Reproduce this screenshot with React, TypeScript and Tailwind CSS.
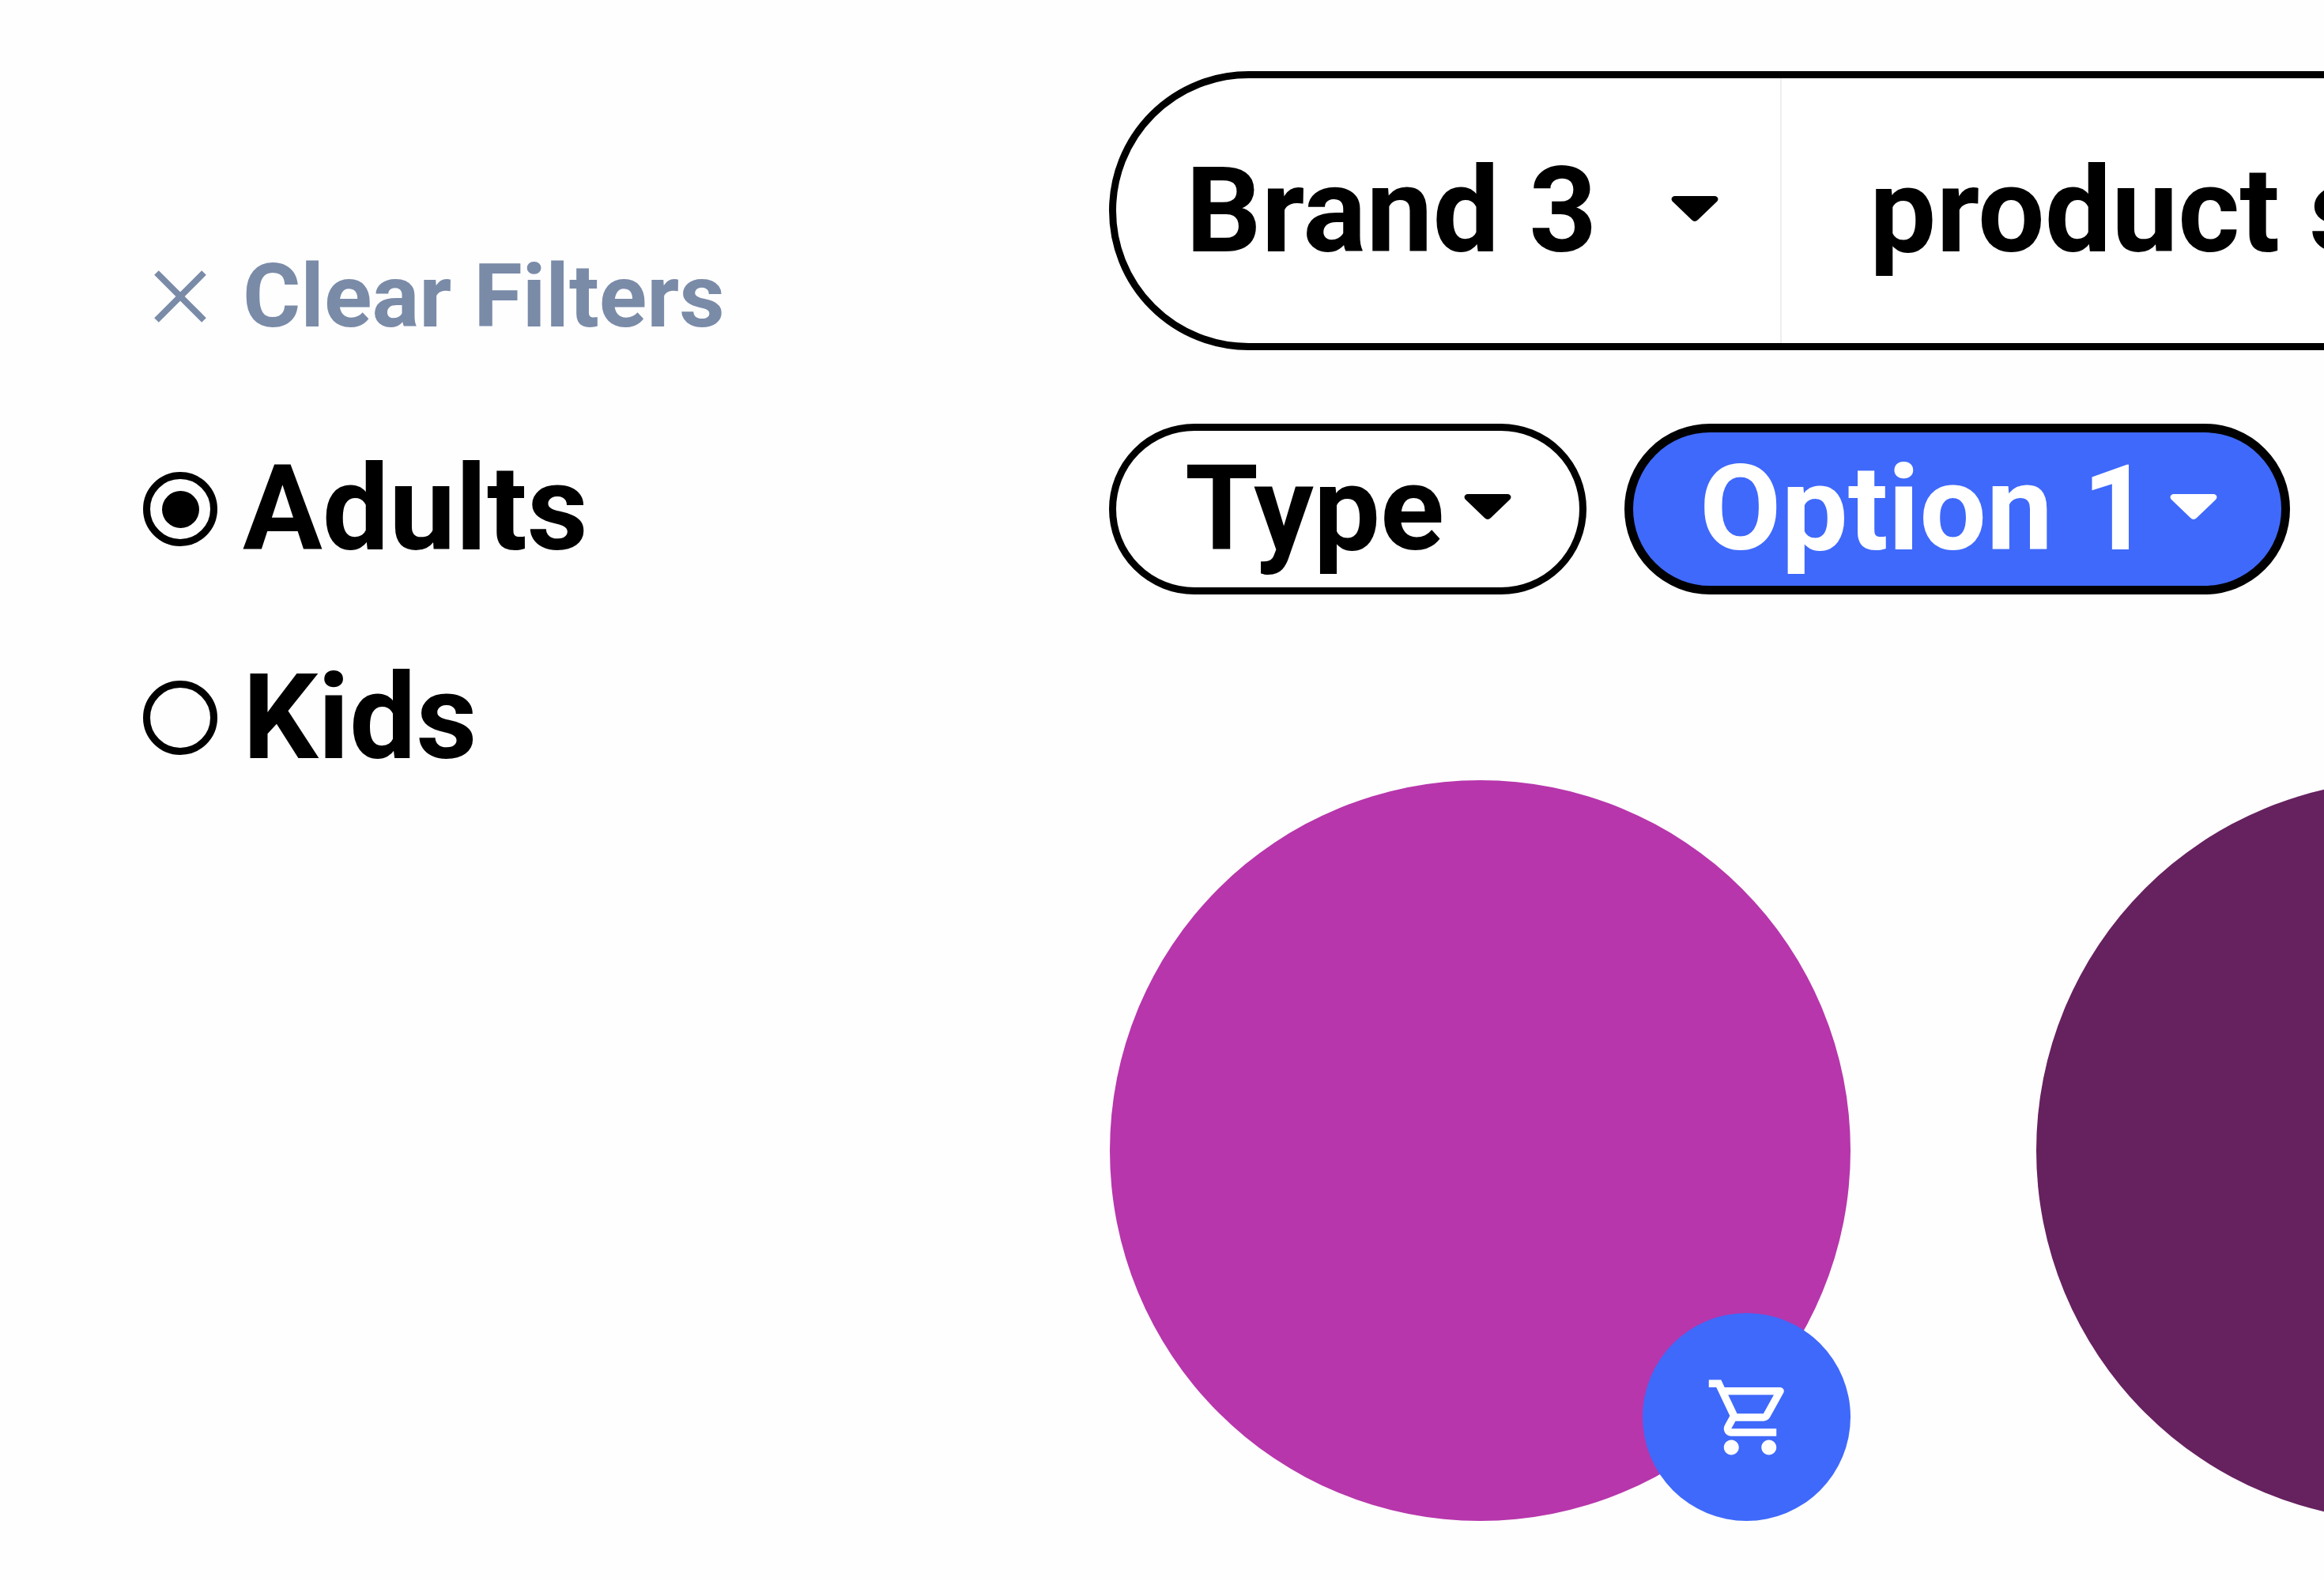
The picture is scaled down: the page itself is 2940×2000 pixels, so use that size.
import { MdOutlineShoppingCart } from "react-icons/md";

function Caret({ className }: { className: string }) {
  return (
    <svg viewBox="0 0 60 33" className={`w-[60px] h-[33px] shrink-0 ${className}`} fill="currentColor">
      <path d="M5 0h50c4 0 6 4 3 7L34 30c-2.500 2.500-5.500 2.500-8 0L2 7C-1 4 1 0 5 0z" />
    </svg>
  );
}

function Radio({ checked }: { checked?: boolean }) {
  return (
    <span className="flex h-[94px] w-[94px] shrink-0 items-center justify-center rounded-full border-[9px] border-black">
      {checked && <span className="h-[47px] w-[47px] rounded-full bg-black" />}
    </span>
  );
}

function Product({ color, cart }: { color: string; cart?: boolean }) {
  return (
    <div className={`relative h-[937px] w-[937px] shrink-0 rounded-full ${color}`}>
      {cart && (
        <button className="absolute bottom-0 right-0 flex h-[263px] w-[263px] items-center justify-center rounded-full bg-[#3f69fb] text-white">
          <MdOutlineShoppingCart size={114} className="ml-[9px]" />
        </button>
      )}
    </div>
  );
}

export default function App() {
  return (
    <div className="flex h-[2000px] w-[2940px] overflow-hidden bg-[#fefefe] font-[Roboto,sans-serif] font-bold text-black">
      <aside className="w-[1403px] shrink-0 pl-[181px] pt-[319px]">
        <div className="flex h-[112px] items-center pl-[14px] text-[#7a8ba8]">
          <svg viewBox="0 0 66 66" className="h-[66px] w-[66px] shrink-0" stroke="currentColor" strokeWidth="8">
            <line x1="3" y1="3" x2="63" y2="63" />
            <line x1="63" y1="3" x2="3" y2="63" />
          </svg>
          <span className="ml-[46px] text-[112px] leading-none">Clear Filters</span>
        </div>
        <div className="mt-[138px] flex h-[150px] items-center gap-[32px]">
          <Radio checked />
          <span className="text-[150px] leading-none">Adults</span>
        </div>
        <div className="mt-[114px] flex h-[150px] items-center gap-[32px]">
          <Radio />
          <span className="text-[150px] leading-none">Kids</span>
        </div>
      </aside>

      <main className="flex-1 pt-[90px]">
        <div className="flex h-[353px] w-[1800px] items-center rounded-full border-[9px] border-black bg-white">
          <div className="flex h-full w-[842px] shrink-0 items-center border-r-2 border-[#eeeeee] pl-[88px]">
            <span className="text-[150px] leading-none">Brand 3</span>
            <Caret className="ml-[94px] mt-[-5px]" />
          </div>
          <span className="ml-[111px] whitespace-nowrap text-[150px] leading-none">product search</span>
        </div>

        <div className="mt-[93px] flex gap-[48px]">
          <div className="flex h-[216px] w-[604px] items-center rounded-full border-[9px] border-black bg-white pl-[87px]">
            <span className="text-[150px] leading-none">Type</span>
            <Caret className="ml-[25px] mt-[-5px]" />
          </div>
          <div className="flex h-[216px] w-[842px] items-center rounded-full border-[11px] border-black bg-[#3f69fb] pl-[84px] text-white">
            <span className="text-[150px] leading-none">Option 1</span>
            <Caret className="ml-[25px] mt-[-5px]" />
          </div>
        </div>

        <div className="ml-[1px] mt-[235px] flex gap-[235px]">
          <Product color="bg-[#b736ab]" cart />
          <Product color="bg-[#66215f]" />
        </div>
      </main>
    </div>
  );
}
